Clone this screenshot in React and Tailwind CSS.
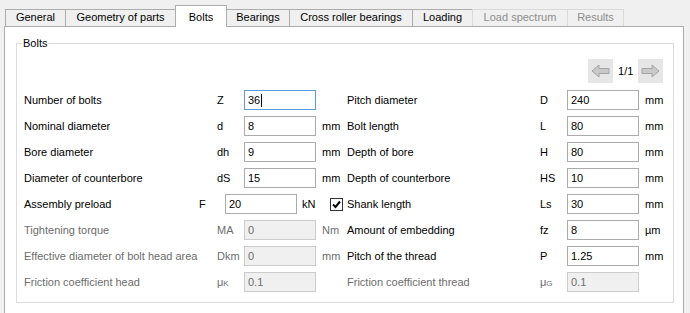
import React from "react";

const tabs = [
  { name: "General", w: "w-[61px]" },
  { name: "Geometry of parts", w: "w-[111px]" },
  { name: "Bolts", w: "w-[52px]", active: true },
  { name: "Bearings", w: "w-[64px]" },
  { name: "Cross roller bearings", w: "w-[124px]" },
  { name: "Loading", w: "w-[61px]" },
  { name: "Load spectrum", w: "w-[96px]", disabled: true },
  { name: "Results", w: "w-[57px]", disabled: true },
];

const leftRows = [
  { label: "Number of bolts", sym: "Z", value: "36", focus: true },
  { label: "Nominal diameter", sym: "d", value: "8", unit: "mm" },
  { label: "Bore diameter", sym: "dh", value: "9", unit: "mm" },
  { label: "Diameter of counterbore", sym: "dS", value: "15", unit: "mm" },
];

const leftDisabled = [
  { label: "Tightening torque", sym: "MA", value: "0", unit: "Nm" },
  { label: "Effective diameter of bolt head area", sym: "Dkm", value: "0", unit: "mm" },
  { label: "Friction coefficient head", sym: "mu", sub: "K", value: "0.1" },
];

const rightRows = [
  { label: "Pitch diameter", sym: "D", value: "240", unit: "mm" },
  { label: "Bolt length", sym: "L", value: "80", unit: "mm" },
  { label: "Depth of bore", sym: "H", value: "80", unit: "mm" },
  { label: "Depth of counterbore", sym: "HS", value: "10", unit: "mm" },
  { label: "Shank length", sym: "Ls", value: "30", unit: "mm" },
  { label: "Amount of embedding", sym: "fz", value: "8", unit: "µm" },
  { label: "Pitch of the thread", sym: "P", value: "1.25", unit: "mm" },
  { label: "Friction coefficient thread", sym: "mu", sub: "G", value: "0.1", disabled: true },
];

function Symbol({ sym, sub }) {
  if (sym === "mu") {
    return (
      <span>
        μ<span className="text-[8px]">{sub}</span>
      </span>
    );
  }
  return <span>{sym}</span>;
}

function Field({ value, focus, disabled }) {
  return (
    <div
      className={
        "flex h-[20px] w-[72px] shrink-0 items-center border px-[3px] " +
        (disabled
          ? "border-[#cccccc] bg-[#f0f0f0] text-[#6d6d6d]"
          : focus
          ? "border-[#569de5] bg-white"
          : "border-[#ababab] bg-white")
      }
    >
      <span>{value}</span>
      {focus && <span className="ml-px h-[13px] w-px bg-black" />}
    </div>
  );
}

function Row({ row, disabled }) {
  const off = disabled || row.disabled;
  return (
    <div className={"flex h-[20px] items-center " + (off ? "text-[#6d6d6d]" : "text-black")}>
      <span className="w-[193px] shrink-0 whitespace-nowrap">{row.label}</span>
      <span className="w-[27px] shrink-0">
        <Symbol sym={row.sym} sub={row.sub} />
      </span>
      <Field value={row.value} focus={row.focus} disabled={off} />
      {row.unit && <span className="ml-[6px]">{row.unit}</span>}
    </div>
  );
}

function Arrow({ dir }) {
  return (
    <div className="flex h-[24px] w-[25px] items-center justify-center bg-[#e6e6e6]">
      <svg width="19" height="14" viewBox="0 0 19 14">
        <polygon
          points={
            dir === "left"
              ? "1,7 8,1 8,4.5 18,4.5 18,9.5 8,9.5 8,13"
              : "18,7 11,1 11,4.5 1,4.5 1,9.5 11,9.5 11,13"
          }
          fill="#c9c9c9"
          stroke="#a3a3a3"
          strokeWidth="1"
          strokeLinejoin="miter"
        />
      </svg>
    </div>
  );
}

export default function App() {
  return (
    <div className="h-[313px] w-[690px] overflow-hidden bg-[#f0f0f0] font-['Liberation_Sans',Arial,sans-serif] text-[11px] text-black">
      <div className="flex h-[26px] items-end pl-[5px]">
        {tabs.map((t, i) =>
          t.active ? (
            <div
              key={t.name}
              className={`${t.w} relative z-10 -mb-px -ml-px flex h-[22px] items-start justify-center border border-b-0 border-[#adadad] bg-white pt-[3px]`}
            >
              {t.name}
            </div>
          ) : (
            <div
              key={t.name}
              className={
                `${t.w} ${i === 0 ? "" : "-ml-px"} flex h-[17px] items-center justify-center border border-b-0 pb-px ` +
                (t.disabled
                  ? "border-[#d9d9d9] text-[#8d8d8d]"
                  : "border-[#adadad] bg-[#f0f0f0]")
              }
            >
              {t.name}
            </div>
          )
        )}
      </div>

      <div className="ml-[4px] h-[300px] w-[680px] border border-[#adadad] bg-white pl-[11px] pr-[9px] pt-[10px]">
        <fieldset className="border border-[#dcdcdc] px-0 pb-[10px]">
          <legend className="ml-[5px] px-px leading-[13px]">Bolts</legend>
          <div className="pl-[7px] pr-[10px]">
            <div className="mt-[9px] flex h-[24px] items-center justify-end">
              <Arrow dir="left" />
              <span className="mx-[5px]">1/1</span>
              <Arrow dir="right" />
            </div>
            <div className="mt-[7px] flex">
              <div className="flex w-[323px] shrink-0 flex-col gap-[6px]">
                {leftRows.map((r) => (
                  <Row key={r.label} row={r} />
                ))}
                <div className="flex h-[20px] items-center">
                  <span className="w-[175px] shrink-0">Assembly preload</span>
                  <span className="w-[26px] shrink-0">F</span>
                  <Field value="20" />
                  <span className="ml-[5px] w-[28px]">kN</span>
                  <div className="flex h-[13px] w-[13px] items-center justify-center border border-[#333333] bg-white">
                    <svg width="9" height="9" viewBox="0 0 9 9">
                      <path d="M1 4.5 L3.5 7 L8 1.5" fill="none" stroke="#000" strokeWidth="2" />
                    </svg>
                  </div>
                </div>
                {leftDisabled.map((r) => (
                  <Row key={r.label} row={r} disabled />
                ))}
              </div>
              <div className="flex flex-col gap-[6px]">
                {rightRows.map((r) => (
                  <Row key={r.label} row={r} />
                ))}
              </div>
            </div>
          </div>
        </fieldset>
      </div>
    </div>
  );
}
